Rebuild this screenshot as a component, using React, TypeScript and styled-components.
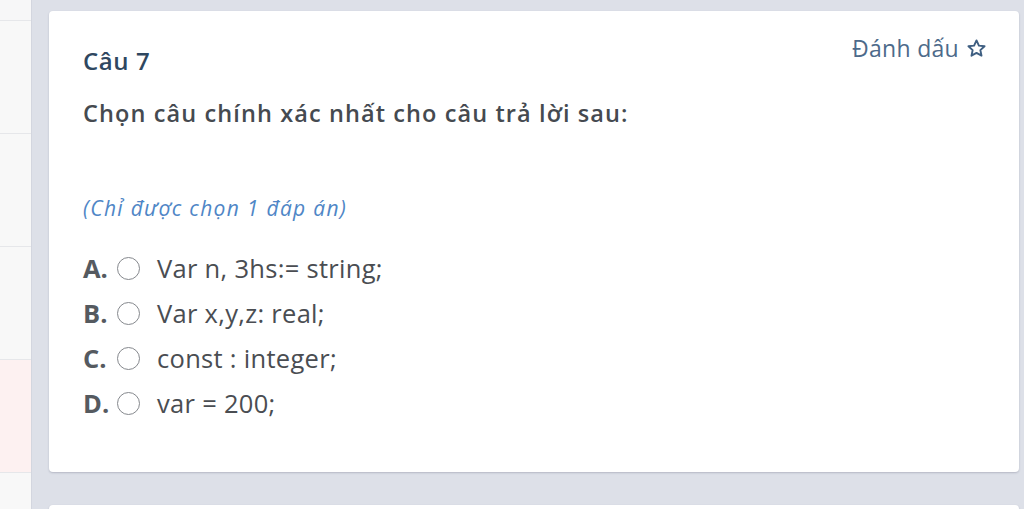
import React, { ReactElement } from "react"
import styled, { createGlobalStyle } from "styled-components"

const GlobalStyle = createGlobalStyle`
  html, body {
    margin: 0;
    padding: 0;
    background: #dde0e8;
    font-family: "Open Sans", "Noto Sans", sans-serif;
  }
  * { box-sizing: border-box; }
`

const Page = styled.div`
  display: flex;
  width: 1024px;
  height: 509px;
  overflow: hidden;
  background: #dde0e8;
`

const Sidebar = styled.div`
  width: 32px;
  flex-shrink: 0;
  background: #f7f7f8;
  border-right: 1px solid #d3d6df;
  padding-top: 20px;
  display: flex;
  flex-direction: column;
`

const SideRow = styled.div<{ $active?: boolean }>`
  height: 113px;
  flex-shrink: 0;
  border-top: 1px solid #e6e7ea;
  background: ${(p) => (p.$active ? "#fdf1f1" : "#f8f8f8")};
`

const Main = styled.div`
  flex: 1;
  padding: 11px 5px 0 17px;
  display: flex;
  flex-direction: column;
  gap: 33px;
`

const Card = styled.div`
  background: #ffffff;
  border-radius: 4px;
  box-shadow: 0 1px 2px rgba(60, 64, 90, 0.25);
  padding: 34px 34px 0 34px;
  flex-shrink: 0;
`

const QuestionCard = styled(Card)`
  height: 461px;
`

const NextCard = styled(Card)`
  height: 40px;
`

const Header = styled.div`
  display: flex;
  justify-content: space-between;
  align-items: flex-start;
`

const Title = styled.div`
  font-size: 24px;
  font-weight: 600;
  letter-spacing: 0.6px;
  color: #2f4760;
  line-height: 32px;
`

const Mark = styled.div`
  display: flex;
  align-items: center;
  gap: 7px;
  margin-top: -12px;
  margin-right: -2px;
  font-size: 23px;
  letter-spacing: 0.3px;
  color: #4d6a8a;
  line-height: 30px;
`

const Prompt = styled.div`
  margin-top: 20px;
  font-size: 23.5px;
  font-weight: 600;
  letter-spacing: 1.1px;
  color: #454a50;
  line-height: 32px;
`

const Hint = styled.div`
  margin-top: 65px;
  font-size: 21px;
  font-style: italic;
  letter-spacing: 1.3px;
  color: #4f86c6;
  line-height: 28px;
`

const Options = styled.div`
  margin-top: 29px;
  display: flex;
  flex-direction: column;
  gap: 11px;
`

const Option = styled.label`
  display: flex;
  align-items: center;
  height: 34px;
  font-size: 25.5px;
  letter-spacing: 0.3px;
  color: #4a4d52;
`

const Letter = styled.span`
  font-weight: 700;
  color: #555a60;
  width: 34px;
  letter-spacing: 0;
`

const Radio = styled.span`
  width: 23px;
  height: 23px;
  border: 1.5px solid #85888d;
  border-radius: 50%;
  margin-right: 17px;
  flex-shrink: 0;
`

const options: [string, string][] = [
  ["A.", "Var n, 3hs:= string;"],
  ["B.", "Var x,y,z: real;"],
  ["C.", "const : integer;"],
  ["D.", "var = 200;"],
]

const Star = (): ReactElement => (
  <svg width="21" height="21" viewBox="0 0 24 24" fill="none" stroke="#3f5f82" strokeWidth="2.2" strokeLinejoin="round">
    <path d="M12 2.8l2.75 5.9 6.45.75-4.8 4.4 1.3 6.35L12 17.05 6.3 20.2l1.3-6.35-4.8-4.4 6.45-.75z" />
  </svg>
)

const App = (): ReactElement => (
  <Page>
    <GlobalStyle />
    <Sidebar>
      <SideRow />
      <SideRow />
      <SideRow />
      <SideRow $active />
      <SideRow />
    </Sidebar>
    <Main>
      <QuestionCard>
        <Header>
          <Title>Câu 7</Title>
          <Mark>
            Đánh dấu <Star />
          </Mark>
        </Header>
        <Prompt>Chọn câu chính xác nhất cho câu trả lời sau:</Prompt>
        <Hint>(Chỉ được chọn 1 đáp án)</Hint>
        <Options>
          {options.map(([letter, text]) => (
            <Option key={letter}>
              <Letter>{letter}</Letter>
              <Radio />
              {text}
            </Option>
          ))}
        </Options>
      </QuestionCard>
      <NextCard />
    </Main>
  </Page>
)

export default App
